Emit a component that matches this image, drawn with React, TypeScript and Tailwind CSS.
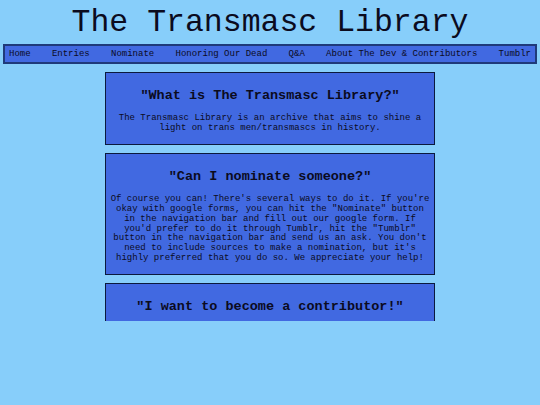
const navItems = [
  'Home',
  'Entries',
  'Nominate',
  'Honoring Our Dead',
  'Q&A',
  'About The Dev & Contributors',
  'Tumblr',
];

const sections = [
  {
    title: '"What is The Transmasc Library?"',
    body: 'The Transmasc Library is an archive that aims to shine a light on trans men/transmascs in history.',
  },
  {
    title: '"Can I nominate someone?"',
    body: 'Of course you can! There\'s several ways to do it. If you\'re okay with google forms, you can hit the "Nominate" button in the navigation bar and fill out our google form. If you\'d prefer to do it through Tumblr, hit the "Tumblr" button in the navigation bar and send us an ask. You don\'t need to include sources to make a nomination, but it\'s highly preferred that you do so. We appreciate your help!',
  },
  {
    title: '"I want to become a contributor!"',
    body: '',
  },
];

export default function App() {
  return (
    <div
      className="h-[405px] bg-[#87cefa] text-[#0b0b1e] overflow-hidden"
      style={{ fontFamily: '"Liberation Mono", "Courier New", monospace' }}
    >
      <h1 className="h-[44px] pt-[2px] text-center text-[31.5px] leading-[42px] font-normal">
        The Transmasc Library
      </h1>

      <nav className="mx-[3px] h-[20px] flex items-center justify-between px-[4px] pt-[1px] bg-[#4169e1] border-2 border-[#1f3a7a] text-[9px]">
        {navItems.map((item) => (
          <a key={item} className="whitespace-nowrap">
            {item}
          </a>
        ))}
      </nav>

      <main className="h-[257px] overflow-hidden flex flex-col items-center pt-2 gap-[8px]">
        {sections.map((s) => (
          <section
            key={s.title}
            className="w-[330px] shrink-0 bg-[#4169e1] border border-[#0b1a3d] px-1 pt-[15px] pb-[11px] text-center"
          >
            <h3 className="text-[13.5px] leading-[15px] font-bold">{s.title}</h3>
            {s.body ? (
              <p className="mt-[11px] text-[9px] leading-[9.7px]">{s.body}</p>
            ) : (
              <div className="h-[60px]" />
            )}
          </section>
        ))}
      </main>
    </div>
  );
}
